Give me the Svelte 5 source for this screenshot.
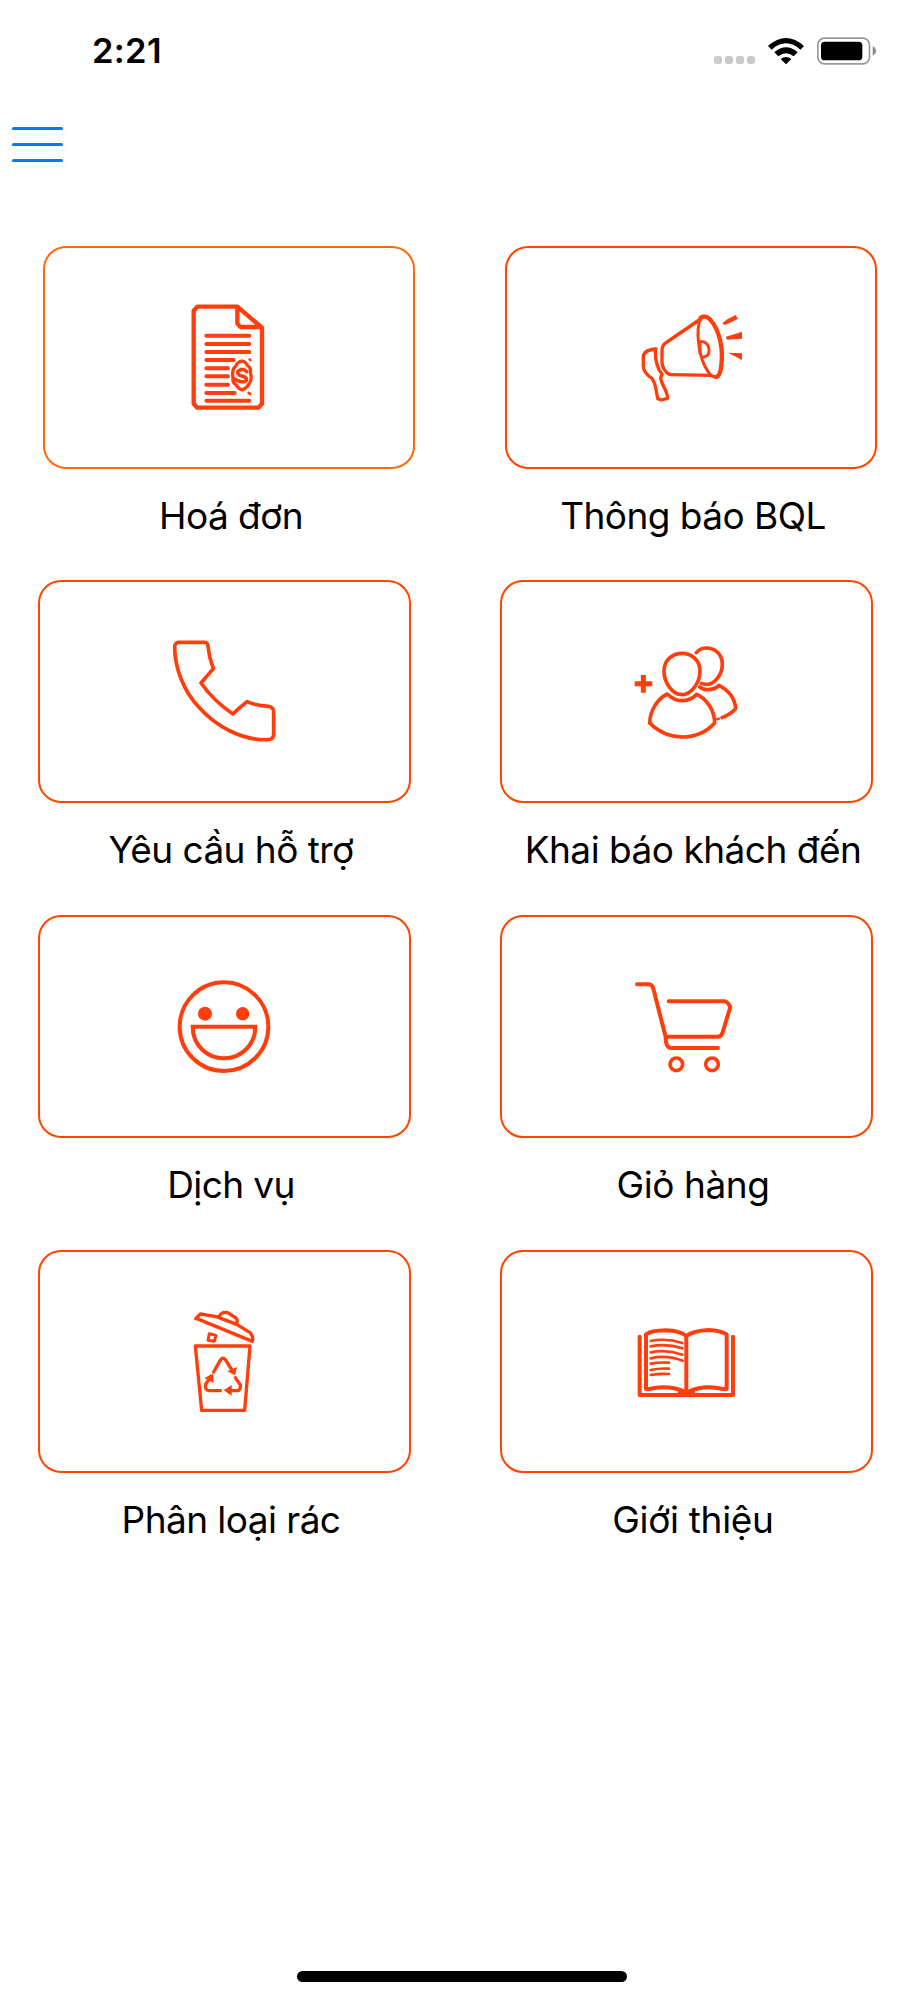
<script lang="ts">
  type Tile = { id: string; label: string; viewBox: string; spacing: number };

  const tiles: Tile[] = [
    { id: 'invoice', label: 'Hoá đơn', viewBox: '-3 20 360 360', spacing: -0.55 },
    { id: 'notice', label: 'Thông báo BQL', viewBox: '31 20 360 360', spacing: -0.55 },
    { id: 'support', label: 'Yêu cầu hỗ trợ', viewBox: '12 20 360 360', spacing: -0.55 },
    { id: 'guest', label: 'Khai báo khách đến', viewBox: '18 20 360 360', spacing: -0.5 },
    { id: 'service', label: 'Dịch vụ', viewBox: '12 3 360 360', spacing: -0.6 },
    { id: 'cart', label: 'Giỏ hàng', viewBox: '18 3 360 360', spacing: -0.45 },
    { id: 'trash', label: 'Phân loại rác', viewBox: '-17 18 360 360', spacing: -0.55 },
    { id: 'about', label: 'Giới thiệu', viewBox: '17 -27 360 360', spacing: -0.3 },
  ];
</script>

<div class="screen">
  <header class="status-bar">
    <span class="time">2:21</span>
    <div class="indicators">
      <div class="signal"><i></i><i></i><i></i><i></i></div>
      <svg class="wifi" viewBox="0 0 108 78">
        <path d="M0 24Q54 -24 108 24L97 35Q54 -3 11 35Z" />
        <path d="M19 43Q54 13 89 43L77 55Q54 36 31 55Z" />
        <path d="M38 63Q54 51 70 63L54 79Z" />
      </svg>
      <svg class="battery" viewBox="0 0 177 84">
        <rect x="2.5" y="3.5" width="155" height="77" rx="20" fill="none" stroke="#999" stroke-width="5" />
        <rect x="12" y="14" width="124" height="56" rx="11" />
        <path d="M167 28Q177 32 177 42T167 56Z" fill="#8e8e8e" />
      </svg>
    </div>
  </header>

  <nav class="toolbar">
    <button class="menu" aria-label="Menu"><i></i><i></i><i></i></button>
  </nav>

  <main class="tiles">
    {#each tiles as tile, i}
      <div class="tile" class:lead={i < 2}>
        <div class="card" class:amber={i === 0}>
          <svg class="icon" viewBox={tile.viewBox}>
            {#if tile.id === 'invoice'}
              <g stroke-width="13">
                <path d="M82 49H202L276 112V340L266 352H82L71 340V61Z" />
                <path d="M202 51V99L211 110H272" />
                <path d="M109 136H238M109 161H238M109 185H238M109 209H191M109 234H174M109 258H174M109 283H174M109 308H194M109 331H238" stroke-width="12" />
                <path d="M217 212Q228 215 232 225Q244 232 241 246Q247 264 239 278Q232 292 217 299Q204 294 199 284Q187 277 189 264Q186 250 190 236Q198 228 202 219Q208 213 217 212Z" stroke-width="10" />
                <path d="M230 244Q224 236 212 238Q201 241 204 250Q208 256 219 258Q231 262 229 270Q222 279 203 271L192 266" stroke-width="11" />
                <path d="M239 207L241 209M236 308L241 311" stroke-width="8" />
              </g>
            {:else if tile.id === 'notice'}
              <g stroke-width="10">
                <path d="M240 86L139 155Q124 162 124 180V213Q124 232 136 244Q143 253 154 253L270 255" />
                <path d="M240 82C224 120 233 202 262 244Q272 260 286 260" stroke-width="9" />
                <path d="M240 82Q254 73 268 87C298 120 308 178 302 224Q299 258 286 260" stroke-width="13" />
                <path d="M240 154Q250 152 258 160Q268 173 264 190Q260 198 249 200M238 162V189" stroke-width="9" />
                <path d="M106 176C90 177 68 181 68 201V229Q70 245 85 258C104 266 106 300 111 325L122 329L141 324C141 303 122 283 120 263L124 252C109 233 103 210 104 179Z" />
              </g>
              <path class="solid" d="M305 99Q322 83 345 74L352 85Q336 94 312 104ZM316 139L364 124V145L318 148ZM322 187L364 189V209Z" />
            {:else if tile.id === 'support'}
              <path d="M55 51H134Q143 51 144 63Q147 96 160 130L147 145L123 173Q162 228 219 266L236 250L261 229Q289 241 326 243Q341 247 341 259V329Q339 343 324 343C246 346 167 303 117 246C71 198 45 129 44 67Q44 53 55 51Z" stroke-width="11" />
            {:else if tile.id === 'guest'}
              <g stroke-width="11">
                <path d="M186 84C215 84 240 105 240 137C240 173 213 208 186 208C158 208 132 173 132 137C132 105 157 84 186 84Z" />
                <path d="M142 206Q161 226 186 226Q211 226 230 207C262 221 284 257 284 293Q246 335 186 335Q128 333 89 293C90 257 111 221 142 206Z" />
                <path d="M229 82Q241 68 259 68C286 68 307 88 307 117C307 149 283 177 260 177Q251 177 244 174" />
                <path d="M239 185Q249 193 263 193Q284 193 297 180C328 196 345 222 347 250Q331 267 306 277" />
                <path d="M291 282L297 280" stroke-width="7" />
                <path d="M44 175H97M70 149V202" stroke-width="15" stroke-linecap="butt" />
              </g>
            {:else if tile.id === 'service'}
              <g stroke-width="12">
                <circle cx="192" cy="185" r="133" />
                <path d="M98 185H286C286 239 244 280 192 280S98 239 98 185Z" stroke-linejoin="miter" />
              </g>
              <circle class="solid" cx="135" cy="146" r="21" />
              <circle class="solid" cx="248" cy="146" r="20" />
            {:else if tile.id === 'cart'}
              <g stroke-width="12">
                <path d="M51 58H86Q97 59 100 71L137 216Q137 249 154 249H294" />
                <path d="M146 109H313Q323 110 331 126L308 202Q304 215 294 215H142" />
                <circle cx="169" cy="298" r="19" stroke-width="11" />
                <circle cx="276" cy="298" r="19" stroke-width="11" />
              </g>
            {:else if tile.id === 'trash'}
              <g stroke-width="10">
                <path d="M77 153H241L225 346H96Z" />
                <path d="M78 71L92 57L140 65L201 88L240 112Q253 124 248 139L80 70" />
                <path d="M148 66Q154 49 174 53L199 69Q205 75 201 88" />
                <path d="M119 116L139 121L134 139L115 136Z" stroke-width="9" />
                <path d="M132 231L153 194Q160 185 167 194L190 230" />
                <path d="M123 244L108 268Q104 286 119 287H152" />
                <path d="M197 248L212 270Q214 287 201 287H174" />
              </g>
              <path class="solid" d="M173 229L202 216L196 241ZM104 249L130 236L132 264ZM162 286L186 270V302Z" />
            {:else}
              <g stroke-width="10">
                <path d="M58 80V255H338V80" stroke-width="12" />
                <path d="M198 78Q177 62 137 61Q92 62 77 73V237H86Q144 224 190 244M198 78Q219 62 264 60Q302 62 319 73V237H307Q253 224 207 244M198 78V242" stroke-width="12" />
                <path d="M179 247H218" stroke-width="13" />
                <path d="M91 93Q138 83 186 99M91 109Q138 99 186 115M91 127Q138 117 186 134M91 145Q138 134 187 152M91 161Q118 156 146 158M91 180Q118 174 146 176M91 195Q118 190 146 192" stroke-width="8" />
              </g>
            {/if}
          </svg>
        </div>
        <span class="label" style="letter-spacing: {tile.spacing}px">{tile.label}</span>
      </div>
    {/each}
  </main>

  <footer class="home"><i></i></footer>
</div>

<style>
  :global(body) {
    background: #fff;
  }
  .screen {
    display: flex;
    flex-direction: column;
    width: 924px;
    height: 2000px;
    overflow: hidden;
    box-sizing: border-box;
    color: #000;
    font-family: Inter, 'Liberation Sans', sans-serif;
  }
  .status-bar {
    display: flex;
    justify-content: space-between;
    align-items: center;
    height: 101px;
    padding: 0 48px 0 92px;
    box-sizing: border-box;
    flex: none;
  }
  .time {
    font-size: 34.5px;
    font-weight: 600;
    line-height: 40px;
    letter-spacing: 0.3px;
  }
  .indicators {
    display: flex;
    align-items: center;
  }
  .signal {
    display: flex;
    gap: 3px;
    margin: 18px 13px 0 0;
  }
  .signal i {
    width: 8px;
    height: 8px;
    border-radius: 2.5px;
    background: #cbcbcb;
  }
  .wifi {
    width: 36px;
    height: 26px;
    margin-right: 13px;
  }
  .battery {
    width: 59px;
    height: 28px;
  }
  .toolbar {
    height: 144.5px;
    padding: 26px 12px 0;
    box-sizing: border-box;
    flex: none;
  }
  .menu {
    display: flex;
    flex-direction: column;
    gap: 13px;
    padding: 0;
    border: 0;
    background: none;
  }
  .menu i {
    width: 51px;
    height: 3px;
    border-radius: 2px;
    background: #007aff;
  }
  .tiles {
    display: grid;
    grid-template-columns: 1fr 1fr;
    grid-auto-rows: 334.7px;
    flex: 1;
    align-content: start;
  }
  .tile {
    display: flex;
    flex-direction: column;
    align-items: center;
  }
  .card {
    display: flex;
    align-items: center;
    justify-content: center;
    width: 373px;
    height: 223px;
    margin-right: 14px;
    border: 2px solid #ff4500;
    border-radius: 23px;
    box-sizing: border-box;
  }
  .lead .card {
    width: 372px;
    margin-right: 4px;
  }
  .card.amber {
    border-color: #ff6a0a;
  }
  .icon {
    width: 120px;
    height: 120px;
    fill: none;
    stroke: #ff3d0d;
    stroke-linecap: round;
    stroke-linejoin: round;
  }
  .icon .solid {
    fill: #ff3d0d;
    stroke: none;
  }
  .label {
    margin-top: 24px;
    font-size: 37px;
    line-height: 46px;
    white-space: nowrap;
  }
  .home {
    display: flex;
    justify-content: center;
    height: 29px;
    flex: none;
  }
  .home i {
    width: 330px;
    height: 11px;
    border-radius: 6px;
    background: #000;
  }
</style>
